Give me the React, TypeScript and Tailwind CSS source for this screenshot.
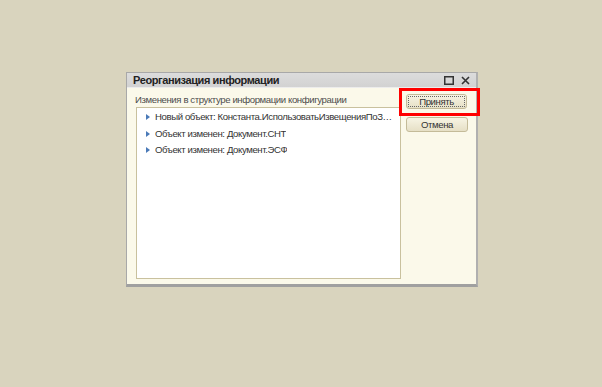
import React from "react";

const items = [
  "Новый объект: Константа.ИспользоватьИзвещенияПоЗачетуНДС",
  "Объект изменен: Документ.СНТ",
  "Объект изменен: Документ.ЭСФ",
];

const Arrow = () => (
  <svg width="4" height="6" viewBox="0 0 4 6" className="shrink-0">
    <path d="M0 0 L4 3 L0 6 Z" fill="#4a7ab8" />
  </svg>
);

const App = () => {
  return (
    <div
      className="relative w-[602px] h-[387px] bg-[#d9d4be] pt-[72px] pl-[126px] text-[9.6px] tracking-[-0.4px] text-[#333]"
      style={{ fontFamily: '"Liberation Sans", Arial, sans-serif' }}
    >
      {/* dialog */}
      <div className="w-[352px] h-[215px] flex flex-col border border-[#a8a8a8] border-b-[3px] border-r-[2px] border-b-[#a0a0a0] border-r-[#b0b0b0] bg-[#fbf9ea]">
        <div className="h-[15px] flex items-center justify-between pl-[6px] pr-[6px] bg-gradient-to-b from-[#dcdcdc] to-[#d2d2d2] border-b border-[#ececec]">
          <span className="font-bold text-[11px] text-[#222]">Реорганизация информации</span>
          <div className="flex items-center gap-[7px]">
            <svg width="10" height="9" viewBox="0 0 10 9">
              <rect x="0.75" y="0.75" width="8.5" height="7.5" fill="none" stroke="#333" strokeWidth="1.5" />
            </svg>
            <svg width="9" height="9" viewBox="0 0 9 9">
              <path d="M1 1 L8 8 M8 1 L1 8" stroke="#333" strokeWidth="1.6" />
            </svg>
          </div>
        </div>
        <div className="flex-1 flex gap-[5px] pl-[8px] pr-[9px] pt-[4px] pb-[5px]">
          <div className="flex flex-col w-[266px]">
            <div className="h-[15px] leading-[15px] text-[#4d4d4d]">Изменения в структуре информации конфигурации</div>
            <div className="ml-[1px] flex-1 bg-white border border-[#c9c19e] pt-[1px] pl-[9px] pr-[4px]">
              {items.map((t) => (
                <div key={t} className="h-[16.5px] flex items-center gap-[5px]">
                  <Arrow />
                  <span className="truncate text-[#333]">{t}</span>
                </div>
              ))}
            </div>
          </div>
          <div className="flex flex-col gap-[8px] pt-[2px]">
            <button className="w-[61px] h-[15px] rounded-[3px] border border-[#c4bb99] bg-gradient-to-b from-[#f7f4e4] to-[#e6e0c6] text-[#333] leading-none outline outline-1 outline-dotted outline-[#666] -outline-offset-[3px]">
              Принять
            </button>
            <button className="w-[62px] h-[15px] rounded-[3px] border border-[#c4bb99] bg-gradient-to-b from-[#f7f4e4] to-[#e6e0c6] text-[#333] leading-none">
              Отмена
            </button>
          </div>
        </div>
      </div>
      {/* highlight */}
      <div className="absolute left-[399px] top-[88px] w-[81px] h-[28px] border-[3px] border-[#ff0000]" />
    </div>
  );
};

export default App;
